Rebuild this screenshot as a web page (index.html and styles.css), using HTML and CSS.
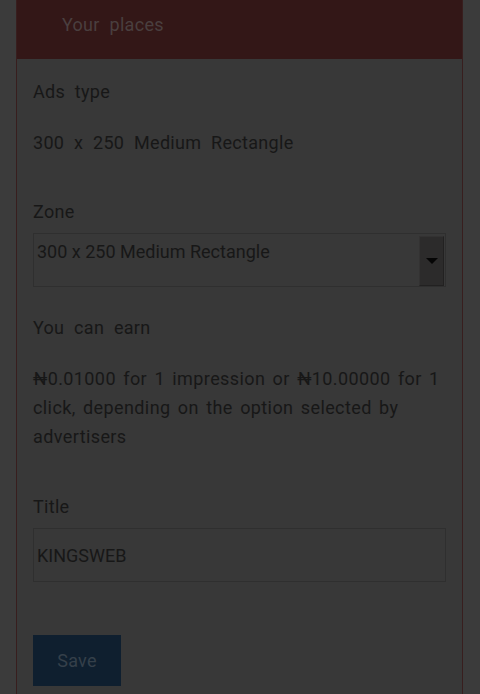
FILE: index.html
```html
<!DOCTYPE html>
<html>
<head>
<meta charset="utf-8">
<link rel="stylesheet" href="styles.css">
</head>
<body>
<div class="page">
  <div class="card">
    <div class="card-header">Your places</div>
    <div class="card-body">
      <div class="label first">Ads type</div>
      <div class="value">300 x 250 Medium Rectangle</div>
      <div class="label gap-lg">Zone</div>
      <div class="select">
        <span class="select-text">300 x 250 Medium Rectangle</span>
        <span class="select-btn"><span class="caret"></span></span>
      </div>
      <div class="label gap-md">You can earn</div>
      <p class="para">₦0.01000 for 1 impression or ₦10.00000 for 1 click, depending on the option selected by advertisers</p>
      <div class="label gap-title">Title</div>
      <div class="input">KINGSWEB</div>
      <div class="actions">
        <button class="btn">Save</button>
      </div>
    </div>
  </div>
</div>
</body>
</html>
```

FILE: styles.css
```css
html, body {
  margin: 0;
  padding: 0;
  background: #3b3b3b;
  height: 100%;
  overflow: hidden;
}
body {
  font-family: Roboto, "Noto Sans", sans-serif;
  font-size: 18px;
  color: #171717;
}
.page {
  margin: 0 17px 0 16px;
}
.card {
  border-left: 1px solid #381e1e;
  border-right: 1px solid #381e1e;
  background: #383838;
  min-height: 720px;
}
.card-header {
  height: 59px;
  box-sizing: border-box;
  background: #331717;
  color: #4a3f3f;
  padding-left: 45px;
  line-height: 50px;
  word-spacing: 5px;
  letter-spacing: 0.3px;
}
.card-body {
  padding: 18px 16px 0 16px;
}
.label, .value, .para {
  line-height: 29px;
  word-spacing: 5px;
  letter-spacing: 0.3px;
}
.value {
  margin-top: 22px;
}
.gap-lg { margin-top: 40px; }
.gap-md { margin-top: 26px; }
.gap-title { margin-top: 41px; }
.select {
  display: flex;
  height: 54px;
  box-sizing: border-box;
  margin-top: 7px;
  border: 1px solid #2f2f2f;
  padding: 2px 1px 0 3px;
}
.select-text {
  flex: 1;
  line-height: 32px;
}
.select-btn {
  width: 25px;
  background: #2c2b2b;
  border: 1px solid #333232;
  border-right-color: #222121;
  border-bottom-color: #222121;
  box-sizing: border-box;
  display: flex;
  align-items: center;
  justify-content: center;
}
.caret {
  width: 0;
  height: 0;
  border-left: 6px solid transparent;
  border-right: 6px solid transparent;
  border-top: 6px solid #050505;
}
.para {
  margin: 22px 0 0 0;
  word-spacing: 2.5px;
  letter-spacing: 0.4px;
}
.input {
  margin-top: 7px;
  height: 54px;
  box-sizing: border-box;
  border: 1px solid #2f2f2f;
  padding-left: 3px;
  line-height: 54px;
}
.actions {
  margin-top: 53px;
}
.btn {
  width: 88px;
  height: 51px;
  border: none;
  border-radius: 0;
  background: #0f1f2f;
  color: #35404a;
  font-family: Roboto, "Noto Sans", sans-serif;
  font-size: 18px;
  letter-spacing: 0.3px;
  padding: 0;
}
```
